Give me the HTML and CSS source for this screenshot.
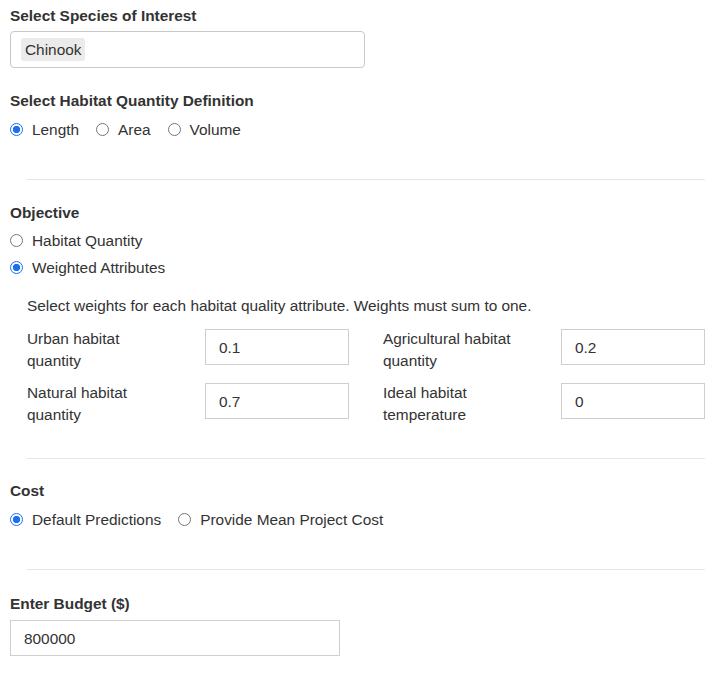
FILE: index.html
```html
<!DOCTYPE html>
<html lang="en">
<head>
<meta charset="utf-8">
<title>Habitat optimisation inputs</title>
<link rel="stylesheet" href="styles.css">
</head>
<body>
<div class="page">
  <section class="group">
    <div class="label">Select Species of Interest</div>
    <div class="select">
      <span class="chip">Chinook</span>
    </div>
  </section>

  <section class="group g-def">
    <div class="label">Select Habitat Quantity Definition</div>
    <div class="radios inline">
      <span class="opt"><span class="radio on"></span>Length</span>
      <span class="opt"><span class="radio"></span>Area</span>
      <span class="opt"><span class="radio"></span>Volume</span>
    </div>
  </section>

  <hr class="rule r1">

  <section class="group">
    <div class="label">Objective</div>
    <div class="radios stacked">
      <span class="opt"><span class="radio"></span>Habitat Quantity</span>
      <span class="opt"><span class="radio on"></span>Weighted Attributes</span>
    </div>
    <div class="weights">
      <p class="hint">Select weights for each habitat quality attribute. Weights must sum to one.</p>
      <div class="wgrid">
        <div class="pair"><span class="wlabel">Urban habitat quantity</span><span class="box">0.1</span></div>
        <div class="pair"><span class="wlabel">Agricultural habitat quantity</span><span class="box">0.2</span></div>
        <div class="pair"><span class="wlabel">Natural habitat quantity</span><span class="box">0.7</span></div>
        <div class="pair"><span class="wlabel">Ideal habitat temperature</span><span class="box">0</span></div>
      </div>
    </div>
  </section>

  <hr class="rule r2">

  <section class="group">
    <div class="label">Cost</div>
    <div class="radios inline">
      <span class="opt"><span class="radio on"></span>Default Predictions</span>
      <span class="opt"><span class="radio"></span>Provide Mean Project Cost</span>
    </div>
  </section>

  <hr class="rule r3">

  <section class="group">
    <div class="label">Enter Budget ($)</div>
    <span class="box budget">800000</span>
  </section>
</div>
</body>
</html>
```

FILE: styles.css
```css
* { box-sizing: border-box; }
html, body { margin: 0; padding: 0; background: #fff; }
body {
  font-family: "Liberation Sans", Arial, Helvetica, sans-serif;
  font-size: 15.4px;
  line-height: 21px;
  color: #333;
}
.page {
  padding: 5px 20px 0 10px;
  width: 725px;
}
.label {
  font-weight: bold;
  height: 21px;
}
.select {
  margin-top: 5px;
  width: 355px;
  height: 37px;
  border: 1px solid #c8c8c8;
  border-radius: 4px;
  display: flex;
  align-items: center;
  padding: 0 10px;
}
.chip {
  background: #ebebeb;
  border-radius: 3px;
  padding: 1px 4px;
  line-height: 21px;
}
.g-def { margin-top: 22px; }
.radios.inline {
  margin-top: 8px;
  display: flex;
  gap: 17px;
}
.radios.stacked {
  margin-top: 7px;
  display: flex;
  flex-direction: column;
  gap: 6px;
}
.opt {
  display: flex;
  align-items: center;
  height: 21px;
}
.radio {
  width: 13px;
  height: 13px;
  border-radius: 50%;
  border: 1px solid #767676;
  background: #fff;
  margin-right: 9px;
  flex: none;
}
.radio.on {
  border: 1.5px solid #1a6ff2;
  background: radial-gradient(circle, #1a6ff2 0 3.4px, #fff 3.9px);
}
.rule {
  border: 0;
  border-top: 1px solid #e6e6e6;
  margin: 0 0 0 17px;
  height: 0;
}
.r1 { margin-top: 39px; margin-bottom: 22px; }
.r2 { margin-top: 32px; margin-bottom: 21px; }
.r3 { margin-top: 39px; margin-bottom: 23px; }
.weights {
  padding-left: 17px;
}
.hint {
  margin: 17px 0 12px;
}
.wgrid {
  display: grid;
  grid-template-columns: 1fr 1fr;
  column-gap: 34px;
  row-gap: 10px;
}
.pair {
  display: flex;
  justify-content: space-between;
  align-items: flex-start;
}
.wlabel {
  width: 140px;
  line-height: 22px;
}
.box {
  display: flex;
  align-items: center;
  width: 144px;
  height: 36px;
  margin-top: 1px;
  border: 1px solid #cfcfcf;
  padding: 0 13px;
  color: #333;
}
.budget {
  width: 330px;
  margin-top: 6px;
}
```
